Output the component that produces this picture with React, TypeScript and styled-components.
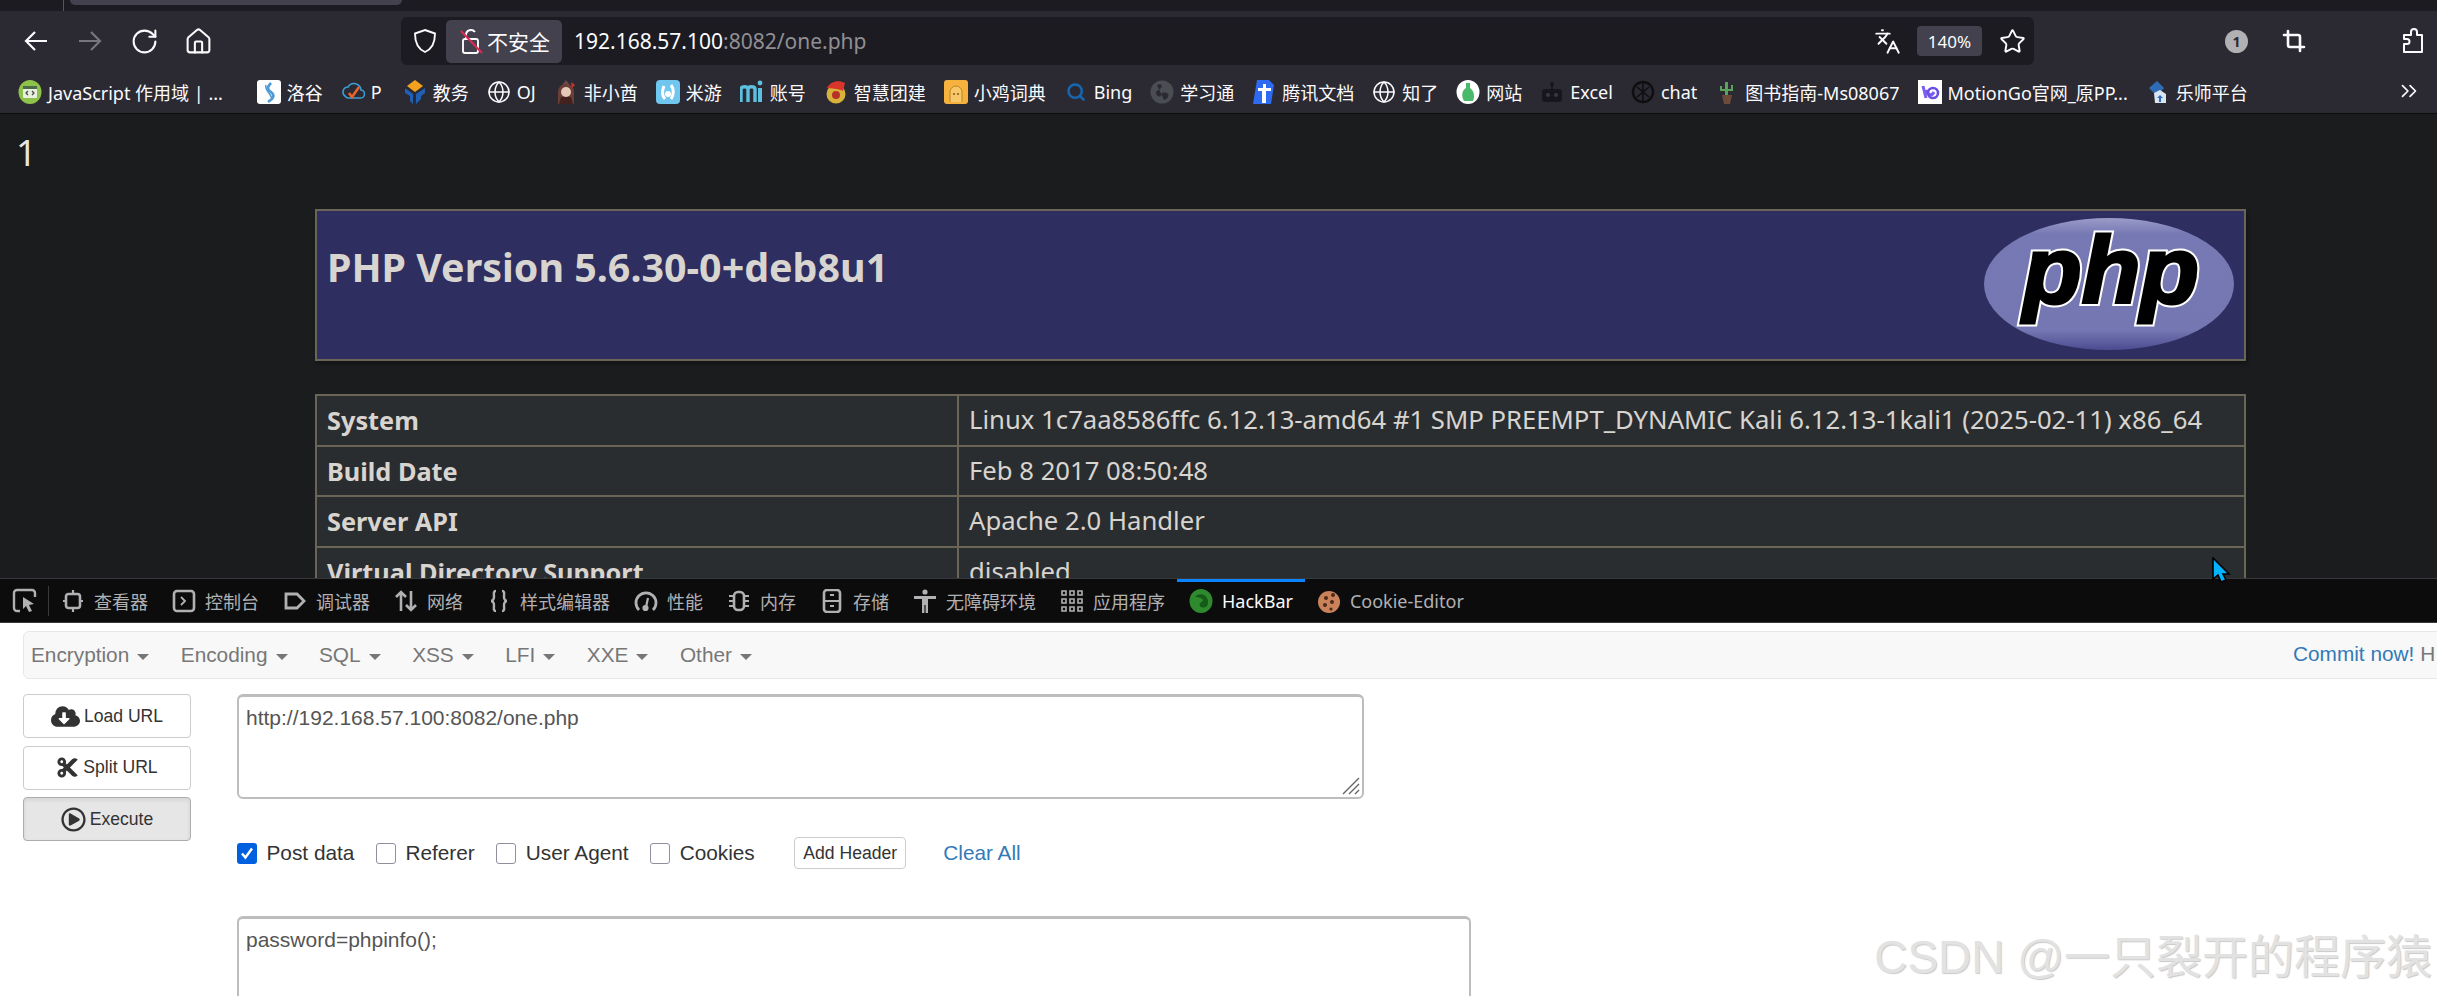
import React from "react";
import styled, { createGlobalStyle } from "styled-components";
import { RotateCw, House, Languages, Star, Crop, ChevronsRight, Globe, Search } from "lucide-react";
import { FaCloudDownloadAlt, FaCut, FaRegPlayCircle } from "react-icons/fa";

const Global = createGlobalStyle`
  html, body { margin: 0; padding: 0; width: 2437px; height: 996px; overflow: hidden; background: #1a1c1e; }
  * { box-sizing: border-box; }
  #root { width: 2437px; height: 996px; overflow: hidden; }
`;

const UI = `"Noto Sans", "Noto Sans CJK SC", sans-serif`;
const AR = `"Liberation Sans", "Noto Sans CJK SC", sans-serif`;

const Frame = styled.div`
  width: 2437px; height: 996px; display: flex; flex-direction: column; overflow: hidden; position: relative;
`;
const TabStrip = styled.div`
  height: 11px; flex: none; background: #1c1b22; display: flex; align-items: flex-start; padding-left: 63px; gap: 6px;
`;
const TabDivider = styled.div`width: 1px; height: 11px; background: #55545e;`;
const TabStub = styled.div`width: 332px; height: 5px; background: #42414d; border-radius: 0 0 5px 5px;`;
const NavBar = styled.div`
  height: 54px; flex: none; background: #2b2a33; display: flex; align-items: center; padding: 6px 0 0 0; color: #fbfbfe;
`;
const NavGroup = styled.div`display: flex; align-items: center; gap: 30px; padding-left: 24px; width: 401px; flex: none;`;
const NavIcon = styled.span<{ $dim?: boolean }>`
  display: flex; align-items: center; justify-content: center; color: ${p => (p.$dim ? "#77767d" : "#fbfbfe")}; width: 24px; height: 24px; flex: none;
  svg { flex: none; }
`;
const UrlBar = styled.div`
  width: 1633px; height: 48px; flex: none; background: #1c1b22; border-radius: 6px; display: flex; align-items: center; padding-left: 12px;
`;
const NotSecure = styled.div`
  margin-left: 9px; width: 116px; height: 43px; background: #42414d; border-radius: 5px; display: flex; align-items: center; padding-left: 13px; gap: 4px;
  font: 400 21px ${UI}; color: #fbfbfe; flex: none;
`;
const UrlText = styled.div`
  margin-left: 12px; font: 400 21px ${UI}; color: #fbfbfe; flex: 1; white-space: nowrap;
  span { color: #8f8f94; }
`;
const Zoom = styled.div`
  width: 65px; height: 30px; background: #42414d; border-radius: 4px; font: 400 17px ${UI}; color: #fbfbfe; display: flex; align-items: center; justify-content: center; margin: 0 18px;
`;
const ToolArea = styled.div`flex: 1; display: flex; align-items: center; padding-left: 191px;`;
const Badge = styled.div`
  width: 23px; height: 23px; border-radius: 50%; background: #b1b1b3; color: #2b2a33; font: 700 14px ${UI}; display: flex; align-items: center; justify-content: center;
`;
const ToolSpacer = styled.div<{ $w: number }>`width: ${p => p.$w}px; flex: none;`;

const Bookmarks = styled.div`
  height: 49px; flex: none; background: #2b2a33; border-bottom: 1px solid #0c0c0d; display: flex; align-items: center; padding: 6px 0 0 18px; gap: 18px; color: #fbfbfe;
  font: 400 18px ${UI}; white-space: nowrap; position: relative;
`;
const Mark = styled.div<{ $extra?: number }>`display: flex; align-items: center; gap: 6px; flex: none; margin-right: ${p => p.$extra ?? 0}px;`;
const Fav = styled.span`width: 24px; height: 24px; flex: none; display: flex; align-items: center; justify-content: center;`;
const MoreMarks = styled.span`position: absolute; right: 15px; top: 13px; display: flex;`;

const Page = styled.div`
  height: 464px; flex: none; background: #1a1c1e; overflow: hidden; color: #d8d4cf; font-family: ${UI};
`;
const One = styled.div`font: 400 36px/40px ${UI}; padding: 19px 0 0 16px; height: 95px; color: #e8e6e3;`;
const PhpBlock = styled.div`margin-left: 315px; width: 1931px;`;
const Header = styled.div`
  height: 152px; background: #2e2e60; border: 2px solid #6b6558; box-shadow: 2px 3px 4px rgba(0,0,0,.3); display: flex; justify-content: space-between; padding: 31px 10px 0 10px;
`;
const Title = styled.h1`margin: 0; font: 700 39.4px/50px ${UI}; color: #d8d4cf;`;
const Logo = styled.svg`width: 250px; height: 132px; margin-top: -24px; flex: none;`;
const Table = styled.div`
  margin-top: 33px; border: 2px solid #6b6558; border-bottom: 0; background: #2a2d2f; display: grid; grid-template-columns: 642px 1fr;
`;
const Key = styled.div`
  height: 50.5px; border-bottom: 2px solid #6b6558; border-right: 2px solid #6b6558; padding: 0 10px; font: 700 25.3px/48px ${UI}; color: #d8d4cf; white-space: nowrap;
`;
const Val = styled.div`
  height: 50.5px; border-bottom: 2px solid #6b6558; padding: 0 10px; font: 400 25.7px/48px ${UI}; color: #d8d4cf; white-space: nowrap;
`;
const Cursor = styled.svg`position: absolute; left: 2211px; top: 557px; width: 20px; height: 27px; z-index: 5;`;

const Devtools = styled.div`
  height: 45px; flex: none; background: #0c0c0d; border-top: 1px solid #38383d; border-bottom: 1px solid #38383d; display: flex; align-items: center; padding-left: 12px;
  font: 400 18px ${UI}; color: #b1b1b3; white-space: nowrap;
`;
const Pick = styled.span`display: flex; width: 25px; height: 26px; flex: none;`;
const Sep = styled.span`width: 1px; height: 30px; background: #38383d; margin: 0 0 0 11px; flex: none;`;
const DTab = styled.div<{ $on?: boolean }>`
  display: flex; align-items: center; gap: 9px; height: 43px; padding: 0 12px; flex: none;
  color: ${p => (p.$on ? "#fbfbfe" : "#b1b1b3")};
  ${p => p.$on ? "box-shadow: inset 0 3px 0 #0a84ff;" : ""}
`;
const DIcon = styled.svg`width: 24px; height: 24px; flex: none;`;

const Hack = styled.div`
  flex: 1; background: #fff; padding: 8px 0 0 23px; font-family: ${AR}; color: #333; position: relative; min-height: 0; overflow: hidden;
`;
const Menu = styled.div`
  height: 48px; width: 2440px; background: #f8f8f8; border: 1.5px solid #e7e7e7; border-radius: 6px; display: flex; align-items: center; padding-left: 7px; position: relative; font-size: 20.8px; color: #777; white-space: nowrap;
`;
const MenuItem = styled.div`display: flex; align-items: center; gap: 8px; margin-right: 31.5px;`;
const Caret = styled.span`width: 0; height: 0; border-left: 6px solid transparent; border-right: 6px solid transparent; border-top: 6px solid #777; margin-top: 3px;`;
const Commit = styled.div`
  position: absolute; left: 2269px; top: 10px; line-height: 24px; color: #777; a { color: #337ab7; margin-right: 6px; }
`;
const Body = styled.div`display: flex; margin-top: 15px;`;
const Side = styled.div`width: 168px; flex: none; display: flex; flex-direction: column; gap: 7.5px;`;
const SideBtn = styled.div<{ $on?: boolean }>`
  height: 44px; border: 1.5px solid ${p => (p.$on ? "#adadad" : "#ccc")}; background: ${p => (p.$on ? "#e6e6e6" : "#fff")}; ${p => p.$on ? "box-shadow: inset 0 2px 4px rgba(0,0,0,.08);" : ""}
  border-radius: 4px; display: flex; align-items: center; justify-content: center; gap: 4px; font-size: 17.6px; color: #333;
`;
const Main = styled.div`margin-left: 46px; flex: 1;`;
const Area = styled.div<{ $w: number; $h: number }>`
  width: ${p => p.$w}px; height: ${p => p.$h}px; border: 2px solid #bdbdbd; border-top-width: 3px; border-radius: 6px; background: #fff; padding: 8px 7px; font-size: 21px; line-height: 26px; color: #555; position: relative;
`;
const Grip = styled.svg`position: absolute; right: 2px; bottom: 2px; width: 22px; height: 22px;`;
const Checks = styled.div`display: flex; align-items: center; height: 38px; margin-top: 35px; font-size: 20.8px; color: #333; white-space: nowrap;`;
const CheckItem = styled.div`display: flex; align-items: center; gap: 9.5px; margin-right: 21.5px;`;
const Box = styled.span<{ $on?: boolean }>`
  width: 20px; height: 21px; border-radius: 3px; flex: none; display: flex; align-items: center; justify-content: center;
  border: ${p => (p.$on ? "0" : "1.5px solid #8f8f9d")}; background: ${p => (p.$on ? "#0060df" : "#fff")};
`;
const AddHeader = styled.div`
  width: 112px; height: 32px; border: 1.5px solid #ccc; border-radius: 4px; display: flex; align-items: center; justify-content: center; font-size: 17.6px; color: #333; margin: 0 37px 0 18px;
`;
const Clear = styled.a`color: #337ab7;`;
const PostWrap = styled.div`margin-top: 44px;`;
const Watermark = styled.div`
  position: absolute; right: 5px; bottom: 13px; font: 400 46px ${AR}; color: #e2e2e2; text-shadow: 1px 1px 1px #c9c9c9; white-space: nowrap; line-height: 52px;
`;

const Img: React.FC<{ children: React.ReactNode }> = ({ children }) => (
  <svg width="24" height="24" viewBox="0 0 24 24">{children}</svg>
);

const favs: Record<string, React.ReactNode> = {
  js: <Img><ellipse cx="12" cy="12" rx="11.5" ry="12" fill="#8fc24a"/><rect x="5" y="6" width="14" height="12" rx="1" fill="#e8f0e0"/><rect x="5" y="6" width="14" height="3" fill="#4c6b4a"/><path d="M10 11l-2 2 2 2M14 11l2 2-2 2" stroke="#444" strokeWidth="1.2" fill="none"/></Img>,
  luogu: <Img><rect width="24" height="24" rx="3" fill="#fff"/><path d="M14 3c-4 4-4 6 0 9s3 6-3 10" stroke="#4d9ad6" strokeWidth="2.6" fill="none"/><path d="M9 5c-2 5 6 9 6 15" stroke="#4d9ad6" strokeWidth="1.6" fill="none"/></Img>,
  p: <Img><path d="M4 16a5 5 0 0 1 3-9 7 7 0 0 1 13 3 4 4 0 0 1-1 8H8a4 4 0 0 1-4-2z" fill="none" stroke="#3d9fd4" strokeWidth="1.6"/><path d="M8 13l3 4 7-10" stroke="#e8622c" strokeWidth="2.6" fill="none"/></Img>,
  edu: <Img><path d="M12 0l8 6-8 6-8-6z" fill="#f4a21e"/><path d="M2 8l8 6v10l-3-3v-5l-5-3zM22 8l-9 6v10l5-5v-3l4-3z" fill="#1f5fb4"/></Img>,
  globe: <Globe size={26} color="#fbfbfe" strokeWidth={1.5}/>,
  xiao: <Img><path d="M6 8l6-8 6 8z" fill="#6a4a44"/><path d="M4 24V12a8 8 0 0 1 16 0v12z" fill="#6b3f38"/><circle cx="12" cy="12" r="5" fill="#e8c8b8"/><path d="M7 17h10l2 7H5z" fill="#43211e"/><path d="M17 2l4 3-3 3z" fill="#c8362c"/></Img>,
  mi: <Img><rect width="24" height="24" rx="4" fill="#6fc6ee"/><path d="M8 6c-2 5-2 10 1 13M15 5c3 4 3 10 0 14" stroke="#fff" strokeWidth="3" fill="none"/><circle cx="12" cy="14" r="3" fill="#fff"/></Img>,
  acc: <Img><path d="M1 22V9c0-3 7-3 7 0v13M8 22V9c0-3 7-3 7 0v13" fill="none" stroke="#5cc1e0" strokeWidth="3.4"/><path d="M20 8v14" stroke="#5cc1e0" strokeWidth="4"/><circle cx="20" cy="3" r="2.4" fill="#5cc1e0"/></Img>,
  tuan: <Img><circle cx="12" cy="14" r="9.5" fill="#d8b23a"/><path d="M3 8C6 2 14-1 21 3l-2 8c-6-3-11-2-16-3z" fill="#d9352a"/><circle cx="12" cy="15" r="4" fill="#b8302a"/></Img>,
  chick: <Img><rect width="24" height="24" rx="3" fill="#f6b23c"/><path d="M6 22V12a6 6 0 0 1 12 0v10" fill="#f8c76a" stroke="#b98622" strokeWidth="1"/><circle cx="10" cy="14" r="1" fill="#7a5a1a"/><circle cx="14" cy="14" r="1" fill="#7a5a1a"/></Img>,
  bing: <Search size={20} color="#1667b0" strokeWidth={3}/>,
  xx: <Img><circle cx="12" cy="12" r="11.5" fill="#4a4d52"/><path d="M7 5c4-2 6 1 4 3s-5 2-5 5 5 5 5 2 5-3 7-1-2 6-4 6" fill="#2b2a33"/></Img>,
  doc: <Img><path d="M5 0h12l5 5-3 19H1z" fill="#2f6bf0"/><path d="M11 4h3v4h5v3h-5v12h-4V11H6V8h5z" fill="#fff"/></Img>,
  site: <Img><ellipse cx="12" cy="12" rx="11.5" ry="12" fill="#fff"/><path d="M10 3h4v5c4 3 5 8 3 13H8C5 16 6 10 10 8z" fill="#49b96a"/></Img>,
  excel: <Img><rect x="2" y="9" width="20" height="13" rx="3" fill="#17161c"/><circle cx="12" cy="4" r="2" fill="#17161c"/><path d="M12 6v3" stroke="#17161c" strokeWidth="2"/><circle cx="8" cy="15" r="2" fill="#3a3942"/><circle cx="16" cy="15" r="2" fill="#3a3942"/></Img>,
  chat: <Img><circle cx="12" cy="12" r="10" fill="none" stroke="#0f0f12" strokeWidth="2.5"/><path d="M6 7l12 10M18 7L6 17M12 3v18" stroke="#0f0f12" strokeWidth="1.6"/></Img>,
  cactus: <Img><path d="M10 2h3v13h-3z" fill="#5ba35a"/><path d="M6 6v4h4M17 5v5h-4" stroke="#5ba35a" strokeWidth="2" fill="none"/><path d="M7 15h10l-2 9H9z" fill="#6e4a3a"/></Img>,
  motion: <Img><rect width="24" height="24" fill="#fff"/><path d="M5 6l3 12M8 10c2 6 6 6 8 2" stroke="#7c5cf0" strokeWidth="3" fill="none"/><circle cx="15" cy="13" r="5" fill="none" stroke="#6a4fe0" strokeWidth="2.6"/></Img>,
  music: <Img><path d="M3 8l8-7 7 7-7 8z" fill="#2f6cb8"/><path d="M8 13l6-3 6 4v9H9z" fill="#d8e6f4"/><path d="M14 15l3 3h-2v4h-2v-4h-2z" fill="#2f6cb8"/></Img>,
};

const marks: [string, string, number?][] = [
  ["js", "JavaScript 作用域 | ...", 16], ["luogu", "洛谷"], ["p", "P", 3], ["edu", "教务"], ["globe", "OJ"], ["xiao", "非小酋"], ["mi", "米游"], ["acc", "账号"],
  ["tuan", "智慧团建"], ["chick", "小鸡词典"], ["bing", "Bing"], ["xx", "学习通"], ["doc", "腾讯文档"], ["globe", "知了"], ["site", "网站"], ["excel", "Excel"], ["chat", "chat"],
  ["cactus", "图书指南-Ms08067"], ["motion", "MotionGo官网_原PP..."], ["music", "乐师平台"],
];

const dt = (n: React.ReactNode) => (
  <DIcon viewBox="0 0 24 24" fill="none" stroke="#b1b1b3" strokeWidth="2.2">{n}</DIcon>
);
const tools: [string, React.ReactNode][] = [
  ["查看器", dt(<><rect x="5" y="5" width="14" height="14" rx="2.5" strokeWidth="2.6"/><path d="M12 1v4M12 19v4M2 12h3M19 12h3"/></>)],
  ["控制台", dt(<><rect x="2" y="2" width="20" height="20" rx="3" strokeWidth="2.6"/><path d="M9 8l4 4-4 4" strokeWidth="1.8"/></>)],
  ["调试器", dt(<path d="M3 5h11l7 7-7 7H3z" strokeWidth="2.8"/>)],
  ["网络", dt(<><path d="M7 22V3M2 8l5-5 5 5" strokeWidth="2.6"/><path d="M17 2v19M12 16l5 5 5-5" strokeWidth="2.6"/></>)],
  ["样式编辑器", dt(<path d="M9 2C6 2 7 5 7 8s-2 4-3 4c1 0 3 1 3 4s-1 6 2 6M15 2c3 0 2 3 2 6s2 4 3 4c-1 0-3 1-3 4s1 6-2 6" strokeWidth="2.4"/>)],
  ["性能", dt(<><path d="M5 21A10 10 0 1 1 19 21" strokeWidth="2.8"/><path d="M14 9l-2 9" /><circle cx="11.5" cy="19" r="2" fill="#b1b1b3"/></>)],
  ["内存", dt(<><rect x="7" y="3" width="10" height="18" rx="4" strokeWidth="2.6"/><path d="M2 7h4M2 12h4M2 17h4M18 7h4M18 12h4M18 17h4" strokeWidth="1.8"/></>)],
  ["存储", dt(<><rect x="4" y="1" width="16" height="22" rx="3" strokeWidth="2.6"/><path d="M4 12h16M10 6h4M10 17h4"/></>)],
  ["无障碍环境", <DIcon key="a" viewBox="0 0 24 24" fill="#b1b1b3"><circle cx="12" cy="3" r="2.6"/><path d="M1 7h22v3h-8v14h-2.4v-8h-1.2v8H9V10H1z"/></DIcon>],
  ["应用程序", dt(<path d="M2 2h4v4H2zM10 2h4v4h-4zM18 2h4v4h-4zM2 10h4v4H2zM10 10h4v4h-4zM18 10h4v4h-4zM2 18h4v4H2zM10 18h4v4h-4zM18 18h4v4h-4z" strokeWidth="1.6"/>)],
];

const LogoWord: React.FC<{ sw: number; color: string; fill: string }> = ({ sw, color, fill }) => (
  <text x="127" y="85" textAnchor="middle" fontFamily="Liberation Sans, sans-serif" fontWeight="700" fontStyle="italic" fontSize="94" textLength="176" lengthAdjust="spacingAndGlyphs" fill={fill} stroke={color} strokeWidth={sw} strokeLinejoin="miter">php</text>
);

export default function App() {
  return (
    <Frame>
      <Global />
      <TabStrip><TabDivider /><TabStub /></TabStrip>
      <NavBar>
        <NavGroup>
          <NavIcon><svg width="24" height="24" viewBox="0 0 24 24" fill="none" stroke="currentColor" strokeWidth="2.2"><path d="M23 12H2M11 3l-9 9 9 9" /></svg></NavIcon>
          <NavIcon $dim><svg width="24" height="24" viewBox="0 0 24 24" fill="none" stroke="currentColor" strokeWidth="2.2"><path d="M1 12h21M13 3l9 9-9 9" /></svg></NavIcon>
          <NavIcon><RotateCw size={29} strokeWidth={1.7} /></NavIcon>
          <NavIcon><House size={29} strokeWidth={1.7} /></NavIcon>
        </NavGroup>
        <UrlBar>
          <NavIcon><svg width="24" height="24" viewBox="0 0 24 24" fill="none" stroke="currentColor" strokeWidth="1.9"><path d="M12 1l10 3.5C22 14 19 20 12 23 5 20 2 14 2 4.5z" /></svg></NavIcon>
          <NotSecure>
            <svg width="24" height="26" viewBox="0 0 24 26" fill="none" stroke="#fbfbfe" strokeWidth="1.9" style={{ flex: "none" }}>
              <rect x="4" y="11" width="15" height="14" rx="2" />
              <path d="M7 11V7a5 5 0 0 1 9-3" />
              <path d="M2 3l21 22" stroke="#e22850" strokeWidth="2" />
            </svg>
            不安全
          </NotSecure>
          <UrlText>192.168.57.100<span>:8082/one.php</span></UrlText>
          <NavIcon><Languages size={27} strokeWidth={1.7} /></NavIcon>
          <Zoom>140%</Zoom>
          <NavIcon><Star size={27} strokeWidth={1.7} /></NavIcon>
          <ToolSpacer $w={10} />
        </UrlBar>
        <ToolArea>
          <Badge>1</Badge>
          <ToolSpacer $w={34} />
          <NavIcon><Crop size={24} strokeWidth={2.6} /></NavIcon>
          <ToolSpacer $w={95} />
          <NavIcon><svg width="24" height="26" viewBox="0 0 24 26" fill="none" stroke="currentColor" strokeWidth="2"><path d="M3 24V16h3a2.500 2.500 0 0 0 0-5H3V7h7V4a3 3 0 0 1 6 0v3h5v17z" strokeLinejoin="round" /></svg></NavIcon>
        </ToolArea>
      </NavBar>
      <Bookmarks>
        {marks.map(([k, t, e], i) => (
          <Mark key={i} $extra={e}><Fav>{favs[k]}</Fav>{t}</Mark>
        ))}
        <MoreMarks><ChevronsRight size={26} strokeWidth={1.6} /></MoreMarks>
      </Bookmarks>
      <Page>
        <One>1</One>
        <PhpBlock>
          <Header>
            <Title>PHP Version 5.6.30-0+deb8u1</Title>
            <Logo viewBox="0 0 250 132">
              <defs>
                <linearGradient id="lg" x1="0" y1="0" x2="0" y2="1">
                  <stop offset="0" stopColor="#9a9cc8" />
                  <stop offset="0.12" stopColor="#7779b4" />
                  <stop offset="0.85" stopColor="#7577b2" />
                  <stop offset="1" stopColor="#4a4c90" />
                </linearGradient>
              </defs>
              <ellipse cx="125" cy="66" rx="125" ry="66" fill="url(#lg)" />
              <LogoWord sw={7} color="#fff" fill="#fff" />
              <LogoWord sw={3} color="#000" fill="#000" />
            </Logo>
          </Header>
          <Table>
            <Key>System</Key><Val>Linux 1c7aa8586ffc 6.12.13-amd64 #1 SMP PREEMPT_DYNAMIC Kali 6.12.13-1kali1 (2025-02-11) x86_64</Val>
            <Key>Build Date</Key><Val>Feb 8 2017 08:50:48</Val>
            <Key>Server API</Key><Val>Apache 2.0 Handler</Val>
            <Key>Virtual Directory Support</Key><Val>disabled</Val>
          </Table>
        </PhpBlock>
      </Page>
      <Devtools>
        <Pick>
          <svg width="25" height="26" viewBox="0 0 25 26" fill="none" stroke="#b1b1b3" strokeWidth="2.4"><path d="M8 23H5a3 3 0 0 1-3-3V5a3 3 0 0 1 3-3h15a3 3 0 0 1 3 3v4" /><path d="M11 9l11 7-5 1 3 6-3 1-3-6-3 3z" fill="#b1b1b3" stroke="none" /></svg>
        </Pick>
        <Sep />
        {tools.map(([t, ic]) => (
          <DTab key={t}>{ic}{t}</DTab>
        ))}
        <DTab $on>
          <svg width="24" height="24" viewBox="0 0 24 24"><ellipse cx="12" cy="12" rx="11.5" ry="12" fill="#2f8a2e" /><path d="M6 8c4-5 12-3 13 4s-6 8-8 5 3-4 3-6-5-3-8-3z" fill="#145a18" /></svg>
          HackBar
        </DTab>
        <DTab>
          <svg width="24" height="24" viewBox="0 0 24 24"><circle cx="12" cy="13" r="11" fill="#c9825a" /><circle cx="9" cy="9" r="2" fill="#4a2a1a" /><circle cx="16" cy="6" r="2" fill="#4a2a1a" /><circle cx="15" cy="13" r="2" fill="#4a2a1a" /><circle cx="8" cy="16" r="2" fill="#4a2a1a" /><circle cx="14" cy="20" r="1.6" fill="#4a2a1a" /></svg>
          Cookie-Editor
        </DTab>
      </Devtools>
      <Hack>
        <Menu>
          {["Encryption", "Encoding", "SQL", "XSS", "LFI", "XXE", "Other"].map(m => (
            <MenuItem key={m}>{m}<Caret /></MenuItem>
          ))}
          <Commit><a>Commit now!</a>H</Commit>
        </Menu>
        <Body>
          <Side>
            <SideBtn><FaCloudDownloadAlt size={29} color="#333" />Load URL</SideBtn>
            <SideBtn><FaCut size={23} color="#333" />Split URL</SideBtn>
            <SideBtn $on><FaRegPlayCircle size={25} color="#333" />Execute</SideBtn>
          </Side>
          <Main>
            <Area $w={1127} $h={105}>
              http://192.168.57.100:8082/one.php
              <Grip viewBox="0 0 22 22"><path d="M21 5L5 21M21 11L11 21M21 17l-4 4" stroke="#666" strokeWidth="1.4" /></Grip>
            </Area>
            <Checks>
              <CheckItem>
                <Box $on><svg width="16" height="16" viewBox="0 0 16 16"><path d="M3 8.500l3.400 4L13 3.500" stroke="#fff" strokeWidth="2.4" fill="none" /></svg></Box>
                Post data
              </CheckItem>
              <CheckItem><Box />Referer</CheckItem>
              <CheckItem><Box />User Agent</CheckItem>
              <CheckItem><Box />Cookies</CheckItem>
              <AddHeader>Add Header</AddHeader>
              <Clear>Clear All</Clear>
            </Checks>
            <PostWrap>
              <Area $w={1234} $h={200}>password=phpinfo();</Area>
            </PostWrap>
          </Main>
        </Body>
        <Watermark>CSDN @一只裂开的程序猿</Watermark>
      </Hack>
      <Cursor viewBox="0 0 20 27"><path d="M2 1v21l5-4 3 7 5-2-3-6h6z" fill="#00b4ff" stroke="#000" strokeWidth="1.6" /></Cursor>
    </Frame>
  );
}
